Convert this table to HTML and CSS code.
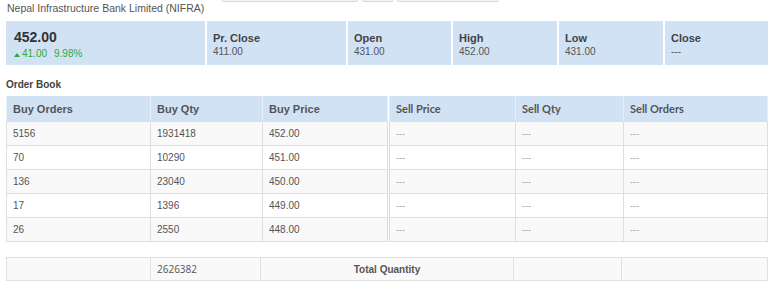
FILE: index.html
```html
<!DOCTYPE html>
<html>
<head>
<meta charset="utf-8">
<link rel="stylesheet" href="styles.css">
</head>
<body>
<div class="page">
  <div class="toolbar">
    <span class="tb-btn tb-a"></span>
    <span class="tb-btn tb-b"></span>
    <span class="tb-btn tb-c"></span>
  </div>
  <div class="title">Nepal Infrastructure Bank Limited (NIFRA)</div>
  <div class="stats">
    <div class="stat stat-main">
      <div class="ltp">452.00</div>
      <div class="chg"><span class="tri"></span>41.00<span class="pct">9.98%</span></div>
    </div>
    <div class="stat s2"><div class="lbl">Pr. Close</div><div class="val">411.00</div></div>
    <div class="stat s3"><div class="lbl">Open</div><div class="val">431.00</div></div>
    <div class="stat s4"><div class="lbl">High</div><div class="val">452.00</div></div>
    <div class="stat s5"><div class="lbl">Low</div><div class="val">431.00</div></div>
    <div class="stat s6"><div class="lbl">Close</div><div class="val">---</div></div>
  </div>
  <div class="ob-title">Order Book</div>
  <table class="ob">
    <colgroup>
      <col class="c1"><col class="c2"><col class="c3"><col class="c4"><col class="c5"><col class="c6">
    </colgroup>
    <thead>
      <tr>
        <th>Buy Orders</th><th>Buy Qty</th><th>Buy Price</th>
        <th class="sell split">Sell Price</th><th class="sell">Sell Qty</th><th class="sell">Sell Orders</th>
      </tr>
    </thead>
    <tbody>
      <tr><td>5156</td><td>1931418</td><td>452.00</td><td class="dash split">---</td><td class="dash">---</td><td class="dash">---</td></tr>
      <tr><td>70</td><td>10290</td><td>451.00</td><td class="dash split">---</td><td class="dash">---</td><td class="dash">---</td></tr>
      <tr><td>136</td><td>23040</td><td>450.00</td><td class="dash split">---</td><td class="dash">---</td><td class="dash">---</td></tr>
      <tr><td>17</td><td>1396</td><td>449.00</td><td class="dash split">---</td><td class="dash">---</td><td class="dash">---</td></tr>
      <tr><td>26</td><td>2550</td><td>448.00</td><td class="dash split">---</td><td class="dash">---</td><td class="dash">---</td></tr>
    </tbody>
  </table>
  <table class="total">
    <colgroup>
      <col class="t1"><col class="t2"><col class="t3"><col class="t4"><col class="t5">
    </colgroup>
    <tr><td></td><td class="tq-num">2626382</td><td class="tq-lbl">Total Quantity</td><td></td><td></td></tr>
  </table>
</div>
</body>
</html>
```
FILE: styles.css
```css
html, body { margin: 0; padding: 0; background: #fff; }
body { font-family: "Liberation Sans", Arial, sans-serif; font-size: 11px; color: #555; width: 768px; height: 287px; overflow: hidden; }
.page { padding-left: 6px; }

.toolbar { display: flex; height: 2px; padding-left: 216px; gap: 4px; }
.tb-btn { display: block; height: 1px; margin-top: 0; border: 1px solid #d6d6d6; border-top: none; border-radius: 0 0 4px 4px; background: #f4f4f4; }
.tb-a { width: 134px; }
.tb-b { width: 29px; }
.tb-c { width: 100px; }

.title { font-size: 10.5px; line-height: 13px; color: #555; margin-left: 1px; height: 19px; }

.stats { display: flex; gap: 2px; height: 44px; }
.stat { background: #d1e2f4; padding: 11px 6px 0; box-sizing: border-box; }
.stat-main { width: 199px; padding-left: 8px; padding-top: 8px; }
.s2 { width: 139px; }
.s3 { width: 103px; }
.s4 { width: 104px; }
.s5 { width: 104px; }
.s6 { flex: 1; }
.ltp { font-size: 14px; font-weight: bold; color: #333; line-height: 16px; }
.chg { font-size: 10px; color: #2eaa3c; line-height: 14px; margin-top: 2px; display: flex; align-items: center; }
.tri { width: 0; height: 0; border-left: 3px solid transparent; border-right: 3px solid transparent; border-bottom: 4px solid #2eaa3c; margin-right: 2px; margin-top: 1px; }
.pct { margin-left: 7px; }
.lbl { font-weight: bold; color: #444; font-size: 11px; line-height: 13px; }
.val { font-size: 10px; line-height: 13px; color: #555; }

.ob-title { font-size: 10px; font-weight: bold; color: #444; line-height: 12px; margin-top: 14px; height: 17px; }

table { border-collapse: collapse; table-layout: fixed; width: 761px; }
.ob th, .ob td { border: 1px solid #dedede; padding: 0 6px; text-align: left; overflow: hidden; white-space: nowrap; }
.ob th { background: #d1e2f4; height: 24px; font-weight: bold; color: #555; font-size: 11px; border-color: #d1e2f4 #e8eef6; border-top: none; }
.ob th.sell { font-family: Lato, "Liberation Sans", sans-serif; font-size: 11px; padding-bottom: 1px; }
.ob td { height: 23px; font-size: 10px; color: #555; }
.ob tbody tr:nth-child(odd) td { background: #f9f9f9; }
.ob .dash { color: #999; font-size: 9px; }
.ob .split { border-left: 3px double #dcdcdc; }
.ob th.split { border-left: 3px double #e6ecf4; }
.c1 { width: 144px; }
.c2 { width: 112px; }
.c3 { width: 126px; }
.c4 { width: 127px; }
.c5 { width: 108px; }
.c6 { width: 144px; }

.total { margin-top: 15px; }
.total td { border: 1px solid #e0e0e0; background: #f9f9f9; height: 22px; padding: 0 6px; font-size: 10px; color: #555; }
.tq-num { font-family: "Open Sans", "Liberation Sans", sans-serif; font-size: 10px; }
.tq-lbl { text-align: center; font-weight: bold; color: #444; font-size: 11px; }
.t1 { width: 144px; }
.t2 { width: 110px; }
.t3 { width: 253px; }
.t4 { width: 108px; }
.t5 { width: 146px; }
```
